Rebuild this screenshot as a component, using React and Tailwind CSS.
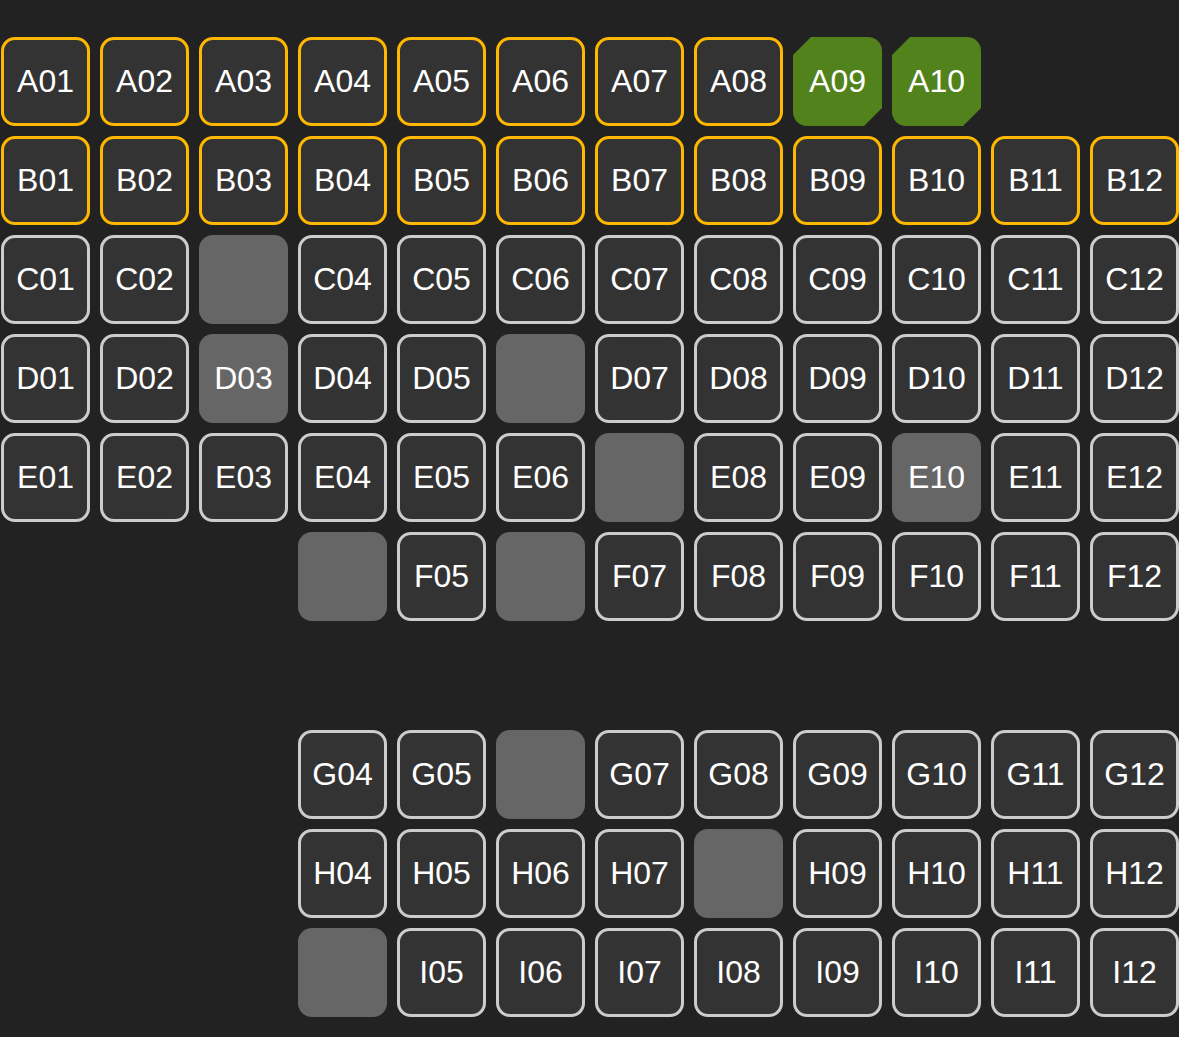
// Seat map: each row is a string of 12 slots.
// "y" = highlighted seat, "n" = normal seat, "g" = booked (green),
// "x" = blocked slot, "d" = disabled seat with label, "-" = no seat.
const rows = [
  { id: "A", slots: "yyyyyyyygg--" },
  { id: "B", slots: "yyyyyyyyyyyy" },
  { id: "C", slots: "nnxnnnnnnnnn" },
  { id: "D", slots: "nndnnxnnnnnn" },
  { id: "E", slots: "nnnnnnxnndnn" },
  { id: "F", slots: "---xnxnnnnnn" },
  { id: "", slots: "------------" },
  { id: "G", slots: "---nnxnnnnnn" },
  { id: "H", slots: "---nnnnxnnnn" },
  { id: "I", slots: "---xnnnnnnnn" },
];

function Seat({ kind, label }) {
  if (kind === "-") return <div />;

  if (kind === "x") return <div className="rounded-[14px] bg-[#666666]" />;

  if (kind === "d") {
    return (
      <div className="flex items-center justify-center rounded-[14px] bg-[#666666] pb-[2px] text-white">
        {label}
      </div>
    );
  }

  if (kind === "g") {
    return (
      <div className="flex items-center justify-center rounded-[14px] bg-[#52821c] pb-[2px] text-white [clip-path:polygon(18px_0,100%_0,100%_calc(100%_-_18px),calc(100%_-_18px)_100%,0_100%,0_18px)]">
        {label}
      </div>
    );
  }

  const border = kind === "y" ? "border-[#ffb800]" : "border-[#cccccc]";
  return (
    <div
      className={`flex items-center justify-center rounded-[14px] border-[3px] bg-[#333333] pb-[2px] text-white ${border}`}
    >
      {label}
    </div>
  );
}

export default function App() {
  return (
    <div className="min-h-screen bg-[#222222] pl-[1px] pt-[37px] font-['Liberation_Sans',Arial,sans-serif] text-[32px] leading-none">
      <div className="grid grid-cols-[repeat(12,89px)] auto-rows-[89px] gap-[10px]">
        {rows.map((row, r) =>
          row.slots.split("").map((kind, c) => {
            const num = String(c + 1).padStart(2, "0");
            return <Seat key={`${r}-${c}`} kind={kind} label={`${row.id}${num}`} />;
          })
        )}
      </div>
    </div>
  );
}
